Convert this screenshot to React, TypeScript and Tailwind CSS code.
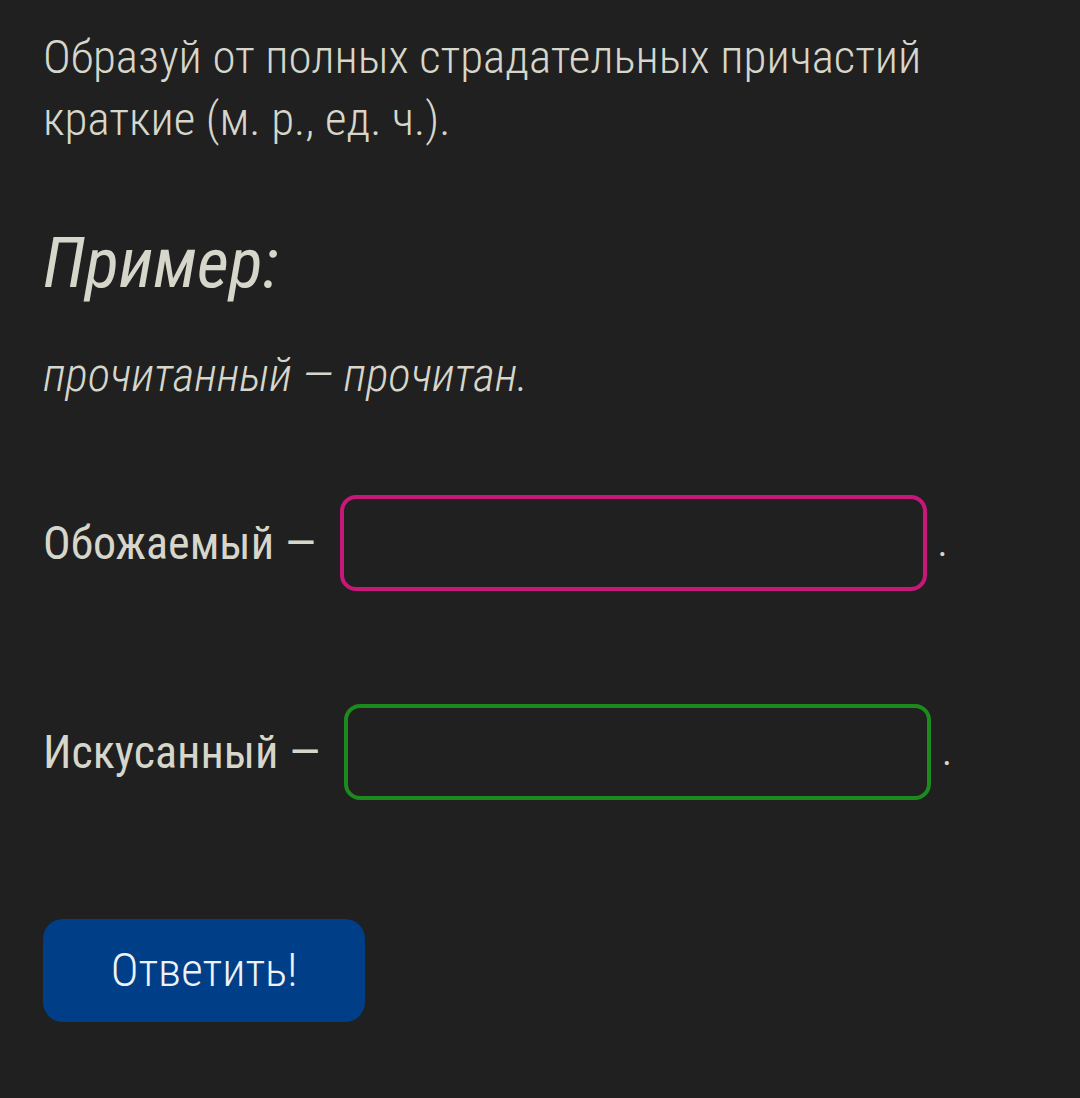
import { useState } from 'react'

const font = { fontFamily: '"Roboto Condensed", Roboto, "Noto Sans", sans-serif' }

function AnswerRow({ label, border }: { label: string; border: string }) {
  const [value, setValue] = useState('')
  return (
    <div className="flex items-center">
      <span className="text-[46px] font-normal leading-none font-stretch-condensed">{label} —</span>
      <input
        value={value}
        onChange={(e) => setValue(e.target.value)}
        className={`ml-[24px] h-[96px] w-[587px] rounded-[16px] border-[4px] bg-transparent px-4 text-[42px] outline-none ${border}`}
      />
      <span className="mt-[2px] ml-[11px] text-[36px] leading-none">.</span>
    </div>
  )
}

export default function App() {
  return (
    <main
      style={font}
      className="min-h-[1098px] w-full bg-[#202020] px-[43px] pt-[26px] text-[#d6d6cb]"
    >
      <p className="text-[47px] leading-[62px] font-light font-stretch-condensed">
        Образуй от полных страдательных причастий
        <br />
        краткие (м. р., ед. ч.).
      </p>

      <h2 className="mt-[71px] text-[70px] font-normal italic leading-[84px] font-stretch-condensed">
        Пример:
      </h2>

      <p className="mt-[45px] text-[47px] font-light italic leading-[50px] font-stretch-condensed">
        прочитанный — прочитан.
      </p>

      <div className="mt-[95px] flex flex-col gap-[113px]">
        <AnswerRow label="Обожаемый" border="border-[#c8177a]" />
        <AnswerRow label="Искусанный" border="border-[#1d8a1d]" />
      </div>

      <button className="mt-[119px] block h-[103px] w-[322px] rounded-[20px] bg-[#003f87] text-[47px] font-light text-[#eef2f6] font-stretch-condensed">
        Ответить!
      </button>
    </main>
  )
}
